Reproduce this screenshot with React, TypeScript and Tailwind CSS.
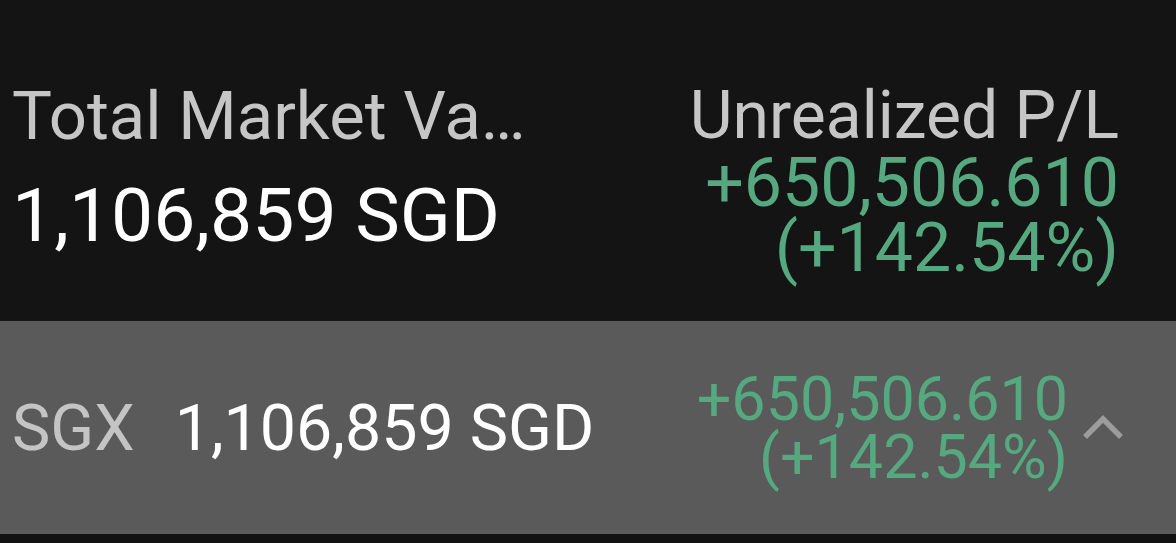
import React from "react";

const font = { fontFamily: "Roboto, 'Noto Sans', Arial, sans-serif" };

export default function App() {
  return (
    <div className="w-[1176px] h-[543px] bg-[#141414] flex flex-col overflow-hidden" style={font}>
      <div className="h-[321px] flex justify-between pl-[12px] pr-[57px] pt-[81px]">
        <div className="flex flex-col">
          <div className="w-[522px] text-[67px] leading-[70px] text-[#c6c6c6] truncate">Total Market Value</div>
          <div className="mt-[24px] text-[75px] leading-[80px] text-white whitespace-nowrap">1,106,859 SGD</div>
        </div>
        <div className="flex flex-col items-end">
          <div className="text-[66px] leading-[70px] text-[#c6c6c6] whitespace-nowrap">Unrealized P/L</div>
          <div className="text-[68px] leading-[65px] text-[#55a880] text-right whitespace-nowrap">
            <div>+650,506.610</div>
            <div>(+142.54%)</div>
          </div>
        </div>
      </div>
      <div className="h-[213px] bg-[#5a5a5a] flex items-center justify-between pl-[12px] pr-[52px]">
        <div className="flex items-center gap-[40px] text-[64.5px] leading-[72px] whitespace-nowrap">
          <span className="text-[#c4c4c4]">SGX</span>
          <span className="text-white">1,106,859 SGD</span>
        </div>
        <div className="flex items-center gap-[14px]">
          <div className="text-[61px] leading-[58px] text-[#55a880] text-right whitespace-nowrap">
            <div>+650,506.610</div>
            <div>(+142.54%)</div>
          </div>
          <svg width="42" height="28" viewBox="0 0 42 28" className="mb-[2px]">
            <path d="M3 24 L21 6 L39 24" fill="none" stroke="#9c9c9c" strokeWidth="5.5" />
          </svg>
        </div>
      </div>
      <div className="flex-1 bg-[#111111]" />
    </div>
  );
}
